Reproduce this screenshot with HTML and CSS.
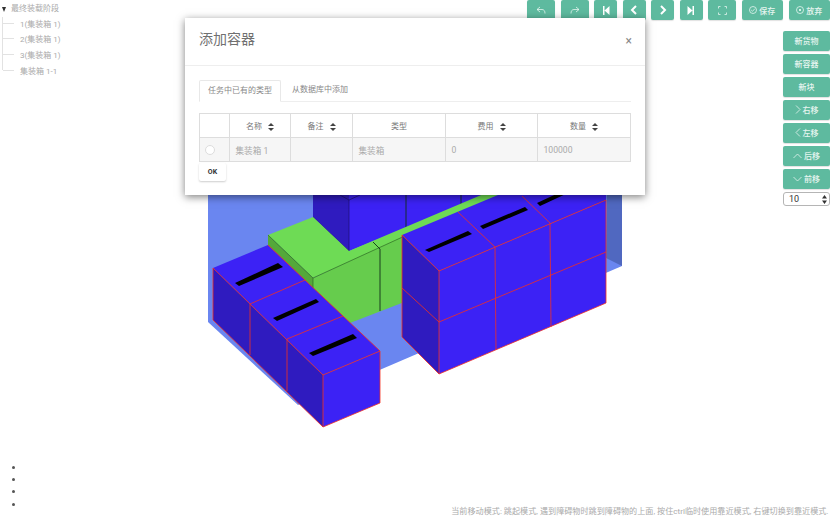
FILE: index.html
```html
<!DOCTYPE html>
<html lang="zh">
<head>
    <meta charset="UTF-8">
    <title>添加容器</title>
    <link rel="stylesheet" href="styles.css">
</head>
<body>
    <div class="page">
        <!-- 3D view -->
        <svg class="scene" width="830" height="518" viewBox="0 0 830 518">
            <polygon fill="#6a86f0" points="208,190 208,322 298,405 622,266 622,190"/>
            <polygon fill="#5068c0" points="607,190 622,190 622,266 606,258"/>

            <!-- back boxes -->
            <polygon fill="#2f1bbf" points="313,190 313,217 349,251 349,190"/>
            <polygon fill="#3c22f5" points="349,190 349,251 500,190"/>
            <polyline class="edge-dark" points="313,217 349,251 349,200 360,195"/>
            <line class="edge-dark" x1="349" y1="200" x2="340" y2="195"/>
            <line class="edge-black" x1="406" y1="190" x2="406" y2="228"/>
            <line class="edge-black" x1="461" y1="190" x2="461" y2="206"/>

            <!-- green boxes -->
            <polygon fill="#6edb55" points="268,235 313,217 349,251 493,190 510,190 313,278"/>
            <polygon fill="#54a83a" points="268,235 268,245 313,288 313,278"/>
            <polygon fill="#66cc4d" points="313,278 420,229 420,296 350,323 313,288"/>
            <polyline class="edge-green" points="268,235 313,278 420,229"/>
            <line class="edge-green" x1="313" y1="278" x2="313" y2="288"/>
            <polyline class="edge-black" points="373,242 380,249 380,311"/>

            <!-- left row -->
            <polygon fill="#2f1bbf" points="213,268 323,375 323,427 213,320"/>
            <polygon fill="#3c22f5" points="323,375 380,351 380,403 323,427"/>
            <polygon fill="#3c22f5" points="213,268 268,245 380,351 323,375"/>
            <g class="edge-red">
                <polyline points="268,245 380,351 380,403 323,427 213,320 213,268 323,375 380,351"/>
                <line x1="323" y1="375" x2="323" y2="427"/>
                <line x1="250" y1="304" x2="305" y2="280"/>
                <line x1="287" y1="339" x2="343" y2="316"/>
                <line x1="250" y1="304" x2="250" y2="355"/>
                <line x1="287" y1="339" x2="287" y2="391"/>
            </g>
            <polygon points="235,283 278,263 283,267 239,286"/>
            <polygon points="273,318 316,299 319,302 277,321"/>
            <polygon points="309,353 353,334 357,338 313,356"/>

            <!-- right stack -->
            <polygon fill="#2f1bbf" points="402,235 439,271 439,374 402,337"/>
            <polygon fill="#3c22f5" points="439,271 606,200 606,303 439,374"/>
            <polygon fill="#3c22f5" points="402,235 510,190 606,190 606,200 439,271"/>
            <g class="edge-red">
                <polyline points="402,235 439,271 606,200 606,303 439,374 402,337 402,235"/>
                <line x1="439" y1="271" x2="439" y2="374"/>
                <polyline points="402,288 439,322 606,252"/>
                <line x1="495" y1="247" x2="496" y2="350"/>
                <line x1="550" y1="223" x2="551" y2="327"/>
                <line x1="458" y1="212" x2="495" y2="247"/>
                <line x1="522" y1="196" x2="550" y2="223"/>
            </g>
            <polygon points="425,250 468,231 472,234 429,252"/>
            <polygon points="480,226 525,207 528,210 483,229"/>
            <polygon points="537,203 565,190 570,192 540,206"/>
        </svg>

        <div class="top">
            <div class="tree">
                <div class="tree-root"><span class="tree-arrow"></span>最终装载阶段</div>
                <ul class="tree-children">
                    <li><span class="tree-line"></span>1(集装箱 1)</li>
                    <li><span class="tree-line"></span>2(集装箱 1)</li>
                    <li><span class="tree-line"></span>3(集装箱 1)</li>
                    <li><span class="tree-line"></span>集装箱 1-1</li>
                </ul>
            </div>

            <div class="controls">
                <div class="toolbar">
                    <button class="btn btn-wide">
                        <svg width="10" height="9" viewBox="0 0 10 9"><path d="M4 1 1 3.500 4 6M1 3.500h5c2 0 3 1.500 3 4"/></svg>
                    </button>
                    <button class="btn btn-wide">
                        <svg width="10" height="9" viewBox="0 0 10 9"><path d="M6 1 9 3.500 6 6M9 3.500H4c-2 0-3 1.500-3 4"/></svg>
                    </button>
                    <button class="btn btn-small">
                        <svg width="8" height="9" viewBox="0 0 8 9"><path class="solid" d="M1 0h1.500v9H1zM7.500 0v9L2.500 4.500z"/></svg>
                    </button>
                    <button class="btn btn-small">
                        <svg width="8" height="10" viewBox="0 0 8 10"><path class="thick" d="M6 1 2 5l4 4"/></svg>
                    </button>
                    <button class="btn btn-small">
                        <svg width="8" height="10" viewBox="0 0 8 10"><path class="thick" d="M2 1l4 4-4 4"/></svg>
                    </button>
                    <button class="btn btn-small">
                        <svg width="8" height="9" viewBox="0 0 8 9"><path class="solid" d="M.5 0v9l5-4.500zM5.500 0H7v9H5.500z"/></svg>
                    </button>
                    <button class="btn btn-wide">
                        <svg width="9" height="9" viewBox="0 0 9 9"><path d="M.5 2.500V.5H2.500M6.500 .5h2V2.500M8.500 6.500v2H6.500M2.500 8.500H.5V6.500"/></svg>
                    </button>
                    <button class="btn btn-text">
                        <svg width="8" height="8" viewBox="0 0 8 8"><circle cx="4" cy="4" r="3.500"/><path d="M2.200 4 3.500 5.300 5.900 2.700"/></svg>保存
                    </button>
                    <button class="btn btn-text">
                        <svg width="8" height="8" viewBox="0 0 8 8"><circle cx="4" cy="4" r="3.500"/><circle class="solid" cx="4" cy="4" r="1"/></svg>放弃
                    </button>
                </div>

                <div class="side-buttons">
                    <button class="btn btn-side">新货物</button>
                    <button class="btn btn-side">新容器</button>
                    <button class="btn btn-side">新块</button>
                    <button class="btn btn-side">
                        <svg width="6" height="9" viewBox="0 0 6 9"><path d="M1 .5l4 4-4 4"/></svg>右移
                    </button>
                    <button class="btn btn-side">
                        <svg width="6" height="9" viewBox="0 0 6 9"><path d="M5 .5l-4 4 4 4"/></svg>左移
                    </button>
                    <button class="btn btn-side">
                        <svg width="9" height="6" viewBox="0 0 9 6"><path d="M.5 5l4-4 4 4"/></svg>后移
                    </button>
                    <button class="btn btn-side">
                        <svg width="9" height="6" viewBox="0 0 9 6"><path d="M.5 1l4 4 4-4"/></svg>前移
                    </button>
                    <div class="step-select">
                        10
                        <svg width="5" height="9" viewBox="0 0 5 9"><path d="M2.500 0 5 3.500H0zM2.500 9 0 5.500h5z"/></svg>
                    </div>
                </div>
            </div>
        </div>

        <div class="bottom">
            <ul class="empty-list">
                <li></li>
                <li></li>
                <li></li>
                <li></li>
            </ul>
            <p class="status">当前移动模式: 跳起模式, 遇到障碍物时跳到障碍物的上面, 按住ctrl临时使用靠近模式, 右键切换到靠近模式.</p>
        </div>

        <!-- modal -->
        <div class="modal">
            <div class="modal-header">
                <h2>添加容器</h2>
                <span class="modal-close">×</span>
            </div>
            <div class="modal-body">
                <div class="tabs">
                    <a class="tab tab-active">任务中已有的类型</a>
                    <a class="tab">从数据库中添加</a>
                </div>
                <table class="data-table">
                    <thead>
                        <tr>
                            <th class="col-radio"></th>
                            <th class="col-name">名称<span class="sort"></span></th>
                            <th class="col-note">备注<span class="sort"></span></th>
                            <th class="col-type">类型</th>
                            <th class="col-cost">费用<span class="sort"></span></th>
                            <th class="col-count">数量<span class="sort"></span></th>
                        </tr>
                    </thead>
                    <tbody>
                        <tr>
                            <td class="cell-radio"><span class="radio"></span></td>
                            <td>集装箱 1</td>
                            <td></td>
                            <td>集装箱</td>
                            <td>0</td>
                            <td>100000</td>
                        </tr>
                    </tbody>
                </table>
                <button class="btn-ok">OK</button>
            </div>
        </div>
    </div>
</body>
</html>
```

FILE: styles.css
```css
body {
    margin: 0;
    font-family: Roboto, "Noto Sans CJK SC", sans-serif;
    background-color: #fff;
}
.page {
    position: relative;
    display: flex;
    flex-direction: column;
    height: 518px;
    overflow: hidden;
}
.scene {
    position: absolute;
    left: 0;
    top: 0;
}
.edge-dark {
    fill: none;
    stroke: #1c1070;
    stroke-width: 0.7;
}
.edge-black {
    fill: none;
    stroke: #10301a;
    stroke-width: 0.9;
}
.edge-green {
    fill: none;
    stroke: #2e6a22;
    stroke-width: 0.7;
}
.edge-red * {
    fill: none;
    stroke: #f5301e;
    stroke-width: 0.8;
}

/* top area */
.top {
    position: relative;
    display: flex;
    justify-content: space-between;
}
.tree {
    padding-top: 3px;
    font-size: 8px;
    line-height: 12px;
    color: #aaa;
}
.tree-root {
    display: flex;
    align-items: center;
    padding-left: 2px;
}
.tree-arrow {
    width: 0;
    height: 0;
    margin-right: 5px;
    border-left: 2.500px solid transparent;
    border-right: 2.500px solid transparent;
    border-top: 5px solid #333;
}
.tree-children {
    list-style: none;
    height: 53px;
    margin: 2px 0 0 2px;
    padding: 0;
    border-left: 1px solid #e2e2e2;
}
.tree-children li {
    display: flex;
    align-items: center;
    height: 15.600px;
}
.tree-line {
    width: 11px;
    height: 1px;
    margin: 0 6px 3px 0;
    background-color: #e2e2e2;
}
.controls {
    display: flex;
    flex-direction: column;
    align-items: flex-end;
}
.toolbar {
    display: flex;
    gap: 5.500px;
}
.btn {
    display: flex;
    align-items: center;
    justify-content: center;
    gap: 2px;
    height: 20px;
    padding: 0;
    border: none;
    border-radius: 2px;
    background-color: #5eba9f;
    box-shadow: 0 1px 1px rgba(0, 0, 0, 0.12);
    color: #e6f5f0;
    font-family: inherit;
    font-size: 8px;
    font-weight: 500;
}
.btn svg {
    fill: none;
    stroke: #e6f5f0;
    stroke-width: 0.8;
}
.btn svg .solid {
    fill: #fff;
    stroke: none;
}
.btn svg .thick {
    stroke: #fff;
    stroke-width: 2;
}
.btn-wide {
    width: 28px;
}
.btn-small {
    width: 23px;
}
.btn-text {
    width: 41.500px;
}
.side-buttons {
    display: flex;
    flex-direction: column;
    gap: 3.500px;
    width: 47px;
    margin-top: 11px;
}
.btn-side {
    width: 47px;
    height: 19.500px;
}
.step-select {
    display: flex;
    align-items: center;
    justify-content: space-between;
    box-sizing: border-box;
    height: 14px;
    padding: 0 2px 0 5px;
    border: 1px solid #b5b5b5;
    border-radius: 3px;
    color: #333;
    font-size: 9px;
}
.step-select svg {
    fill: #333;
}

/* bottom area */
.bottom {
    position: relative;
    display: flex;
    align-items: flex-end;
    justify-content: space-between;
    margin-top: auto;
    padding-right: 1.500px;
}
.empty-list {
    margin: 0 0 7px;
    padding-left: 25px;
    font-size: 10px;
    line-height: 12.300px;
    color: #555;
}
.empty-list li {
    height: 12.300px;
}
.status {
    margin: 0 0 1px;
    font-size: 8.120px;
    line-height: 12px;
    white-space: nowrap;
    color: #aaa;
}

/* modal */
.modal {
    position: absolute;
    left: 185px;
    top: 18px;
    width: 460px;
    height: 177px;
    background-color: #fff;
    box-shadow: 0 2px 8px rgba(0, 0, 0, 0.5);
}
.modal-header {
    display: flex;
    align-items: center;
    justify-content: space-between;
    height: 48px;
    box-sizing: border-box;
    padding: 0 13px 0 14px;
    border-bottom: 1px solid #eee;
}
.modal-header h2 {
    margin: 0 0 7px;
    font-size: 14px;
    font-weight: 400;
    color: #707070;
}
.modal-close {
    margin-bottom: 1px;
    font-size: 12px;
    color: #888;
}
.modal-body {
    padding: 14px 14px 0;
}
.tabs {
    display: flex;
    box-sizing: border-box;
    height: 22px;
    border-bottom: 1px solid #eee;
}
.tab {
    box-sizing: border-box;
    height: 22px;
    padding: 0 11px;
    font-size: 8px;
    line-height: 20px;
    white-space: nowrap;
    color: #888;
}
.tab-active {
    width: 82px;
    padding: 0 8px;
    border: 1px solid #e8e8e8;
    border-bottom-color: #fff;
    border-radius: 2px 2px 0 0;
}
.data-table {
    width: 432px;
    margin-top: 11px;
    border-collapse: collapse;
    table-layout: fixed;
    font-size: 8.600px;
    color: #aaa;
}
.data-table th, .data-table td {
    height: 24px;
    padding: 0 5.500px;
    border: 1px solid #ddd;
    box-sizing: border-box;
}
.data-table th {
    font-size: 8px;
    font-weight: 400;
    color: #777;
    text-align: center;
}
.data-table td {
    background-color: #f6f6f6;
}
.col-radio {
    width: 30px;
}
.col-name {
    width: 61px;
}
.col-note {
    width: 62px;
}
.col-type {
    width: 93px;
}
.col-cost {
    width: 92px;
}
.sort {
    display: inline-block;
    position: relative;
    width: 6px;
    height: 8px;
    margin-left: 6px;
    vertical-align: middle;
}
.sort::before, .sort::after {
    content: "";
    position: absolute;
    left: 0;
    border-left: 3px solid transparent;
    border-right: 3px solid transparent;
}
.sort::before {
    top: 0;
    border-bottom: 3.500px solid #444;
}
.sort::after {
    bottom: 0;
    border-top: 3.500px solid #444;
}
.data-table .cell-radio {
    padding: 0 0 0 5px;
}
.radio {
    display: block;
    box-sizing: border-box;
    width: 10px;
    height: 10px;
    border: 1px solid #ddd;
    border-radius: 50%;
    background-color: #fff;
}
.btn-ok {
    display: block;
    width: 27px;
    height: 18px;
    margin-top: 1px;
    padding: 0;
    border: none;
    border-radius: 2px;
    background-color: #fff;
    box-shadow: 0 1px 2px rgba(0, 0, 0, 0.2);
    font-family: inherit;
    font-size: 7px;
    font-weight: 700;
    color: #333;
}
```
